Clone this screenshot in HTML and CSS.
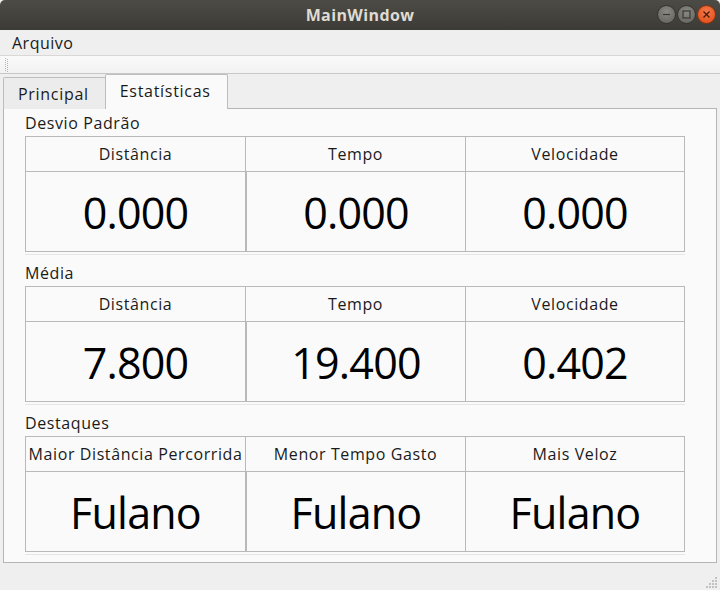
FILE: index.html
```html
<!DOCTYPE html>
<html lang="pt">
<head>
<meta charset="utf-8">
<title>MainWindow</title>
<link rel="stylesheet" href="styles.css">
</head>
<body>
<div class="window">
  <header class="titlebar">
    <span class="title">MainWindow</span>
    <div class="controls">
      <span class="ctl ctl-min"><svg width="19" height="19" viewBox="0 0 19 19"><line x1="6" y1="9.5" x2="13" y2="9.5" stroke="#3a3935" stroke-width="1.2"/></svg></span>
      <span class="ctl ctl-max"><svg width="19" height="19" viewBox="0 0 19 19"><rect x="6" y="6" width="7" height="7" fill="none" stroke="#3a3935" stroke-width="1.2"/></svg></span>
      <span class="ctl ctl-close"><svg width="19" height="19" viewBox="0 0 19 19"><path d="M6.5 6.5 L12.5 12.5 M12.5 6.5 L6.5 12.5" stroke="#4a1a08" stroke-width="1.3"/></svg></span>
    </div>
  </header>
  <nav class="menubar"><span class="menu-item">Arquivo</span></nav>
  <div class="toolbar">
    <svg class="handle" width="4" height="14" viewBox="0 0 4 14">
      <g fill="#b4b4b4">
        <rect x="0" y="0" width="1" height="1"/><rect x="2" y="1" width="1" height="1"/>
        <rect x="0" y="2" width="1" height="1"/><rect x="2" y="3" width="1" height="1"/>
        <rect x="0" y="4" width="1" height="1"/><rect x="2" y="5" width="1" height="1"/>
        <rect x="0" y="6" width="1" height="1"/><rect x="2" y="7" width="1" height="1"/>
        <rect x="0" y="8" width="1" height="1"/><rect x="2" y="9" width="1" height="1"/>
        <rect x="0" y="10" width="1" height="1"/><rect x="2" y="11" width="1" height="1"/>
        <rect x="0" y="12" width="1" height="1"/><rect x="2" y="13" width="1" height="1"/>
      </g>
    </svg>
  </div>
  <div class="tabs">
    <span class="tab">Principal</span>
    <span class="tab tab-active">Estatísticas</span>
  </div>
  <main class="pane">
    <section class="group">
      <div class="group-label">Desvio Padrão</div>
      <div class="table">
        <div class="row head"><div class="cell">Distância</div><div class="cell">Tempo</div><div class="cell">Velocidade</div></div>
        <div class="row body"><div class="cell">0.000</div><div class="cell">0.000</div><div class="cell">0.000</div></div>
      </div>
    </section>
    <section class="group">
      <div class="group-label">Média</div>
      <div class="table">
        <div class="row head"><div class="cell">Distância</div><div class="cell">Tempo</div><div class="cell">Velocidade</div></div>
        <div class="row body"><div class="cell">7.800</div><div class="cell">19.400</div><div class="cell">0.402</div></div>
      </div>
    </section>
    <section class="group">
      <div class="group-label">Destaques</div>
      <div class="table">
        <div class="row head"><div class="cell">Maior Distância Percorrida</div><div class="cell">Menor Tempo Gasto</div><div class="cell">Mais Veloz</div></div>
        <div class="row body"><div class="cell">Fulano</div><div class="cell">Fulano</div><div class="cell">Fulano</div></div>
      </div>
    </section>
  </main>
  <footer class="statusbar">
    <svg class="grip" width="12" height="12" viewBox="0 0 12 12">
      <g fill="#c2c2c2">
        <rect x="9" y="0" width="2" height="2"/>
        <rect x="6" y="3" width="2" height="2"/><rect x="9" y="3" width="2" height="2"/>
        <rect x="3" y="6" width="2" height="2"/><rect x="6" y="6" width="2" height="2"/><rect x="9" y="6" width="2" height="2"/>
        <rect x="0" y="9" width="2" height="2"/><rect x="3" y="9" width="2" height="2"/><rect x="6" y="9" width="2" height="2"/><rect x="9" y="9" width="2" height="2"/>
      </g>
    </svg>
  </footer>
</div>
</body>
</html>
```

FILE: styles.css
```css
* { box-sizing: border-box; }
html, body { margin: 0; padding: 0; }
body {
  width: 720px;
  height: 590px;
  overflow: hidden;
  background: #efefef;
  font-family: "Open Sans", "Noto Sans", sans-serif;
  color: #1a1a1a;
}
.window { display: flex; flex-direction: column; height: 590px; }

.titlebar {
  height: 30px;
  flex: none;
  background: linear-gradient(#4c4b46, #3c3b37);
  display: flex;
  align-items: center;
  justify-content: center;
  position: relative;
  border-radius: 5px 5px 0 0;
}
.title {
  color: #dfdbd2;
  font-weight: bold;
  font-size: 16px;
  letter-spacing: 0.4px;
}
.controls {
  position: absolute;
  right: 4px;
  top: 5px;
  display: flex;
  gap: 1px;
}
.ctl {
  width: 19px;
  height: 19px;
  border-radius: 50%;
  display: block;
  background: radial-gradient(circle at 50% 35%, #8a8983, #5f5e59);
  border: 1px solid #35342f;
}
.ctl svg { display: block; margin: -1px; }
.ctl-close { background: radial-gradient(circle at 50% 35%, #f47a4a, #dd4814); border-color: #8a3210; }

.menubar {
  height: 26px;
  flex: none;
  background: #efefef;
  display: flex;
  align-items: center;
  padding-left: 12px;
  border-bottom: 1px solid #d8d8d8;
}
.menu-item { font-size: 16px; letter-spacing: 0.5px; color: #1a1a1a; }

.toolbar {
  height: 18px;
  flex: none;
  background: linear-gradient(#fafafa, #f2f2f2);
  border-bottom: 1px solid #c8c8c8;
  display: flex;
  align-items: center;
  padding-left: 5px;
}
.handle { display: block; }

.tabs {
  height: 35px;
  flex: none;
  display: flex;
  align-items: flex-end;
  padding-left: 3px;
  margin-bottom: -1px;
  position: relative;
  z-index: 1;
}
.tab {
  height: 32px;
  padding: 0 16px 0 14px;
  display: flex;
  align-items: center;
  font-size: 16px;
  letter-spacing: 0.7px;
  color: #1a1a1a;
  background: #ececec;
  border: 1px solid #bdbdbd;
  border-bottom: none;
  border-radius: 2px 2px 0 0;
}
.tab-active {
  height: 35px;
  background: #fafafa;
  padding: 0 16px 3px 14px;
  margin-left: -1px;
}

.pane {
  margin: 0 3px;
  height: 455px;
  flex: none;
  background: #fafafa;
  border: 1px solid #b5b5b5;
  padding: 0 0 0 21px;
  display: flex;
  flex-direction: column;
  gap: 3px;
}
.group { display: flex; flex-direction: column; }
.group-label {
  height: 27px;
  font-size: 16px;
  letter-spacing: 0.6px;
  color: #1a1a1a;
  display: flex;
  align-items: center;
  padding-top: 1px;
}
.group + .group .group-label { height: 28px; }

.table {
  width: 660px;
  height: 119px;
  border-bottom: 1px solid #e6e6e6;
  padding-bottom: 3px;
}
.row {
  display: grid;
  grid-template-columns: 220px 220px 219px;
  border-left: 1px solid #b9b9b9;
}
.cell {
  border-right: 1px solid #b9b9b9;
  border-bottom: 1px solid #b9b9b9;
  display: flex;
  align-items: center;
  justify-content: center;
  white-space: nowrap;
  background: #fafafa;
}
.head { border-top: 1px solid #b9b9b9; }
.head .cell { height: 35px; font-size: 16px; letter-spacing: 0.6px; color: #1a1a1a; }
.body .cell { height: 80px; font-size: 43px; letter-spacing: -0.8px; color: #000; padding-top: 2px; }
.body .cell:nth-child(2) { border-left: 1px solid #b9b9b9; }

.statusbar {
  flex: 1;
  background: #efefef;
  position: relative;
}
.grip {
  position: absolute;
  right: 2px;
  bottom: 1px;
  display: block;
}
```
